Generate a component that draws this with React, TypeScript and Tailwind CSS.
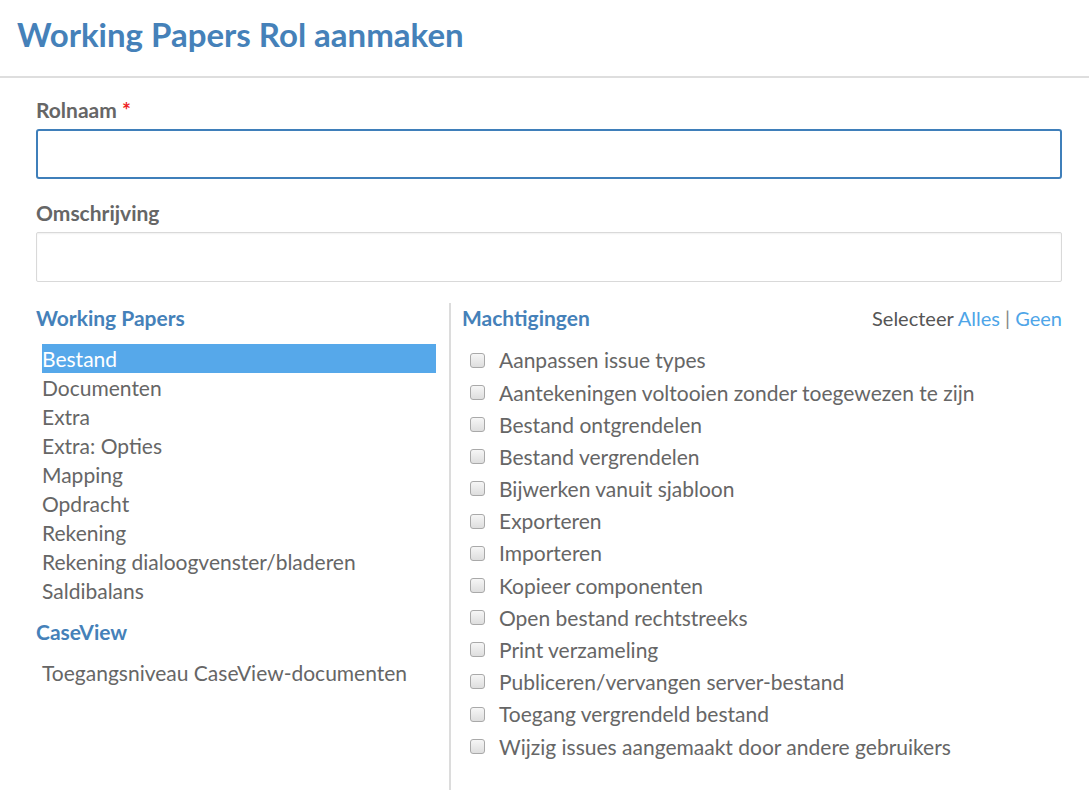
import { useState } from "react";

const workingPapers = [
  "Bestand",
  "Documenten",
  "Extra",
  "Extra: Opties",
  "Mapping",
  "Opdracht",
  "Rekening",
  "Rekening dialoogvenster/bladeren",
  "Saldibalans",
];

const permissions = [
  "Aanpassen issue types",
  "Aantekeningen voltooien zonder toegewezen te zijn",
  "Bestand ontgrendelen",
  "Bestand vergrendelen",
  "Bijwerken vanuit sjabloon",
  "Exporteren",
  "Importeren",
  "Kopieer componenten",
  "Open bestand rechtstreeks",
  "Print verzameling",
  "Publiceren/vervangen server-bestand",
  "Toegang vergrendeld bestand",
  "Wijzig issues aangemaakt door andere gebruikers",
];

export default function App() {
  const [selected, setSelected] = useState("Bestand");
  const [name, setName] = useState("");
  const [description, setDescription] = useState("");

  return (
    <div className="flex h-screen flex-col overflow-hidden bg-white font-['Lato',sans-serif] text-[#666]">
      <div className="h-[78px] shrink-0 border-b-2 border-[#dedede] pl-[17px] pt-[12px]">
        <h1 className="text-[33px] font-bold leading-[44px] text-[#4581b9]">Working Papers Rol aanmaken</h1>
      </div>

      <div className="flex min-h-0 flex-1 flex-col pl-[36px] pr-[27px]">
        <label htmlFor="rolnaam" className="mt-[20px] block text-[21px] font-bold leading-[24px]">
          Rolnaam <span className="text-[#e22]">*</span>
        </label>
        <input
          id="rolnaam"
          value={name}
          onChange={(ev) => setName(ev.target.value)}
          className="mt-[7px] h-[50px] w-full rounded-[3px] border-2 border-[#3f7fba] px-3 text-[18px] outline-none"
        />

        <label htmlFor="omschrijving" className="mt-[22px] block text-[21px] font-bold leading-[24px]">
          Omschrijving
        </label>
        <input
          id="omschrijving"
          value={description}
          onChange={(ev) => setDescription(ev.target.value)}
          className="mt-[7px] h-[50px] w-full rounded-[2px] border border-[#d9d9d9] px-3 text-[18px] shadow-[inset_0_1px_2px_rgba(0,0,0,0.06)] outline-none"
        />

        <div className="mt-[21px] flex min-h-0 flex-1">
          <div className="w-[413px] shrink-0 pr-[13px]">
            <h2 className="pt-[3px] text-[21px] font-bold leading-[24px] text-[#4581b9]">Working Papers</h2>
            <ul className="ml-[6px] mt-[14px]">
              {workingPapers.map((item) => (
                <li
                  key={item}
                  onClick={() => setSelected(item)}
                  className={
                    item === selected
                      ? "h-[29px] cursor-pointer bg-[#56a8ea] text-[21px] leading-[29px] text-white"
                      : "h-[29px] cursor-pointer text-[21px] leading-[29px] text-[#666]"
                  }
                >
                  {item}
                </li>
              ))}
            </ul>
            <h2 className="mt-[15px] text-[21px] font-bold leading-[24px] text-[#4581b9]">CaseView</h2>
            <ul className="ml-[6px] mt-[14px]">
              <li className="h-[29px] text-[21px] leading-[29px] text-[#666]">Toegangsniveau CaseView-documenten</li>
            </ul>
          </div>

          <div className="flex-1 border-l-2 border-[#dcdcdc] pl-[11px]">
            <div className="flex items-center justify-between pt-[3px]">
              <h2 className="text-[21px] font-bold leading-[24px] text-[#4581b9]">Machtigingen</h2>
              <div className="text-[20px] leading-[24px] text-[#555]">
                Selecteer <a className="cursor-pointer text-[#4ea5e8]">Alles</a>{" "}
                <span className="text-[#888]">|</span> <a className="cursor-pointer text-[#4ea5e8]">Geen</a>
              </div>
            </div>
            <ul className="mt-[14px]">
              {permissions.map((p) => (
                <li key={p} className="flex h-[32.2px] items-center text-[21px] text-[#666]">
                  <span className="ml-[8px] mr-[14px] h-[15px] w-[15px] shrink-0 rounded-[3px] border border-[#a9a9a9] bg-gradient-to-b from-[#f6f6f6] to-[#dedede]" />
                  {p}
                </li>
              ))}
            </ul>
          </div>
        </div>
      </div>
    </div>
  );
}
